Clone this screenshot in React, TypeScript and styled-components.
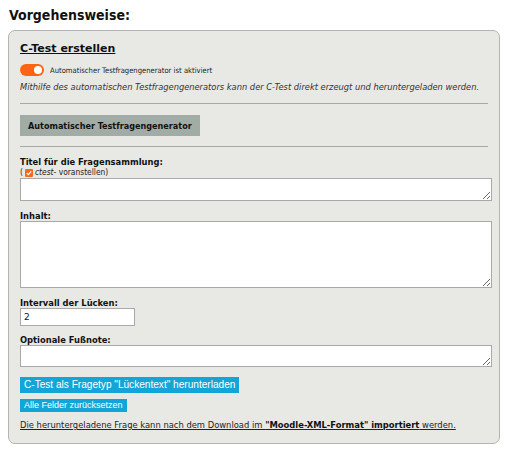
import React from "react";
import styled, {createGlobalStyle} from "styled-components";

const GlobalStyle = createGlobalStyle`
    body {
        margin: 0;
        background: #ffffff;
        font-family: "DejaVu Sans", Verdana, sans-serif;
        color: #1a1a1a;
    }
`

const narrow = `"DejaVu Sans Condensed", "DejaVu Sans", Tahoma, sans-serif`

const Page = styled.div`
    padding: 6px 9px 8px 8px;
`

const Heading = styled.h2`
    margin: 0 0 6px 1px;
    font-family: ${narrow};
    font-stretch: condensed;
    font-size: 14px;
    font-weight: bold;
    line-height: 18px;
    color: #111;
`

const Panel = styled.section`
    background: #e8e9e5;
    border: 1px solid #b4b4b0;
    border-radius: 7px;
    padding: 11px 7px 12px 11px;
    display: flex;
    flex-direction: column;
`

const SectionTitle = styled.h3`
    margin: 0;
    font-size: 11px;
    font-weight: bold;
    text-decoration: underline;
    line-height: 14px;
    color: #111;
`

const ToggleRow = styled.label`
    display: flex;
    align-items: center;
    gap: 6px;
    margin-top: 8px;
    font-family: ${narrow};
    font-stretch: condensed;
    font-size: 7.6px;
    color: #222;
`

const Switch = styled.span<{ $on: boolean }>`
    position: relative;
    width: 24px;
    height: 12px;
    border-radius: 6px;
    background: ${p => p.$on ? '#fa6414' : '#bbb'};

    &::after {
        content: '';
        position: absolute;
        top: 2px;
        left: ${p => p.$on ? '14px' : '2px'};
        width: 8px;
        height: 8px;
        border-radius: 50%;
        background: #fff;
    }
`

const Hint = styled.p`
    margin: 6px 0 0;
    font-size: 8.3px;
    font-style: italic;
    color: #333;
    line-height: 11px;
`

const Rule = styled.hr`
    border: none;
    border-top: 1px solid #a8a8a4;
    margin: 10px 4px 0 0;
`

const GreyButton = styled.button`
    align-self: flex-start;
    margin-top: 11px;
    height: 21px;
    padding: 0 8px;
    border: none;
    background: #a2aca6;
    font-family: ${narrow};
    font-stretch: condensed;
    font-size: 9px;
    font-weight: bold;
    color: #111;
`

const Field = styled.div<{ $gap: number }>`
    display: flex;
    flex-direction: column;
    margin-top: ${p => p.$gap}px;
`

const Label = styled.span`
    font-family: ${narrow};
    font-stretch: condensed;
    font-size: 9.3px;
    font-weight: bold;
    line-height: 11px;
    color: #111;
`

const SubLabel = styled.span`
    display: flex;
    align-items: center;
    font-family: ${narrow};
    font-stretch: condensed;
    font-size: 8.4px;
    line-height: 11px;
    color: #222;
`

const Check = styled.span`
    display: inline-flex;
    align-items: center;
    justify-content: center;
    width: 8px;
    height: 8px;
    margin: 0 2px 0 2px;
    background: #f26a1b;
    border-radius: 1px;
`

const Area = styled.textarea<{ $h: number }>`
    display: block;
    box-sizing: border-box;
    width: 100%;
    height: ${p => p.$h}px;
    margin: 0;
    border: 1px solid #a9a9a9;
    background: #fff;
    font-family: inherit;
    font-size: 9px;
    resize: vertical;
`

const Input = styled.input`
    box-sizing: border-box;
    width: 115px;
    height: 18px;
    margin: 0;
    padding: 0 3px;
    border: 1px solid #a9a9a9;
    background: #fff;
    font-family: inherit;
    font-size: 9px;
    color: #111;
`

const BlueButton = styled.button<{ $big?: boolean }>`
    align-self: flex-start;
    margin-top: ${p => p.$big ? 10 : 6}px;
    height: ${p => p.$big ? 16 : 13}px;
    padding: 0 4px;
    border: none;
    background: #13a5d7;
    color: #fff;
    font-family: "Liberation Sans", Arial, sans-serif;
    font-size: ${p => p.$big ? 10.1 : 9}px;
    line-height: 1;
`

const Note = styled.p`
    margin: 8px 0 0;
    font-size: 8.4px;
    line-height: 11px;
    text-decoration: underline;
    color: #222;

    b {
        color: #111;
    }
`

export default function App() {
    return (
        <>
            <GlobalStyle/>
            <Page>
                <Heading>Vorgehensweise:</Heading>
                <Panel>
                    <SectionTitle>C-Test erstellen</SectionTitle>
                    <ToggleRow>
                        <Switch $on={true}/>
                        Automatischer Testfragengenerator ist aktiviert
                    </ToggleRow>
                    <Hint>Mithilfe des automatischen Testfragengenerators kann der C-Test direkt erzeugt und heruntergeladen werden.</Hint>
                    <Rule/>
                    <GreyButton>Automatischer Testfragengenerator</GreyButton>
                    <Rule/>

                    <Field $gap={9}>
                        <Label>Titel für die Fragensammlung:</Label>
                        <SubLabel>
                            (
                            <Check>
                                <svg width="6" height="6" viewBox="0 0 6 6">
                                    <path d="M0.8 3.2 L2.4 4.7 L5.2 1.3" fill="none" stroke="#fff" strokeWidth="1.2"/>
                                </svg>
                            </Check>
                            <i>ctest</i>- voranstellen)
                        </SubLabel>
                        <Area $h={23}/>
                    </Field>

                    <Field $gap={9}>
                        <Label>Inhalt:</Label>
                        <Area $h={67}/>
                    </Field>

                    <Field $gap={9}>
                        <Label>Intervall der Lücken:</Label>
                        <Input defaultValue="2"/>
                    </Field>

                    <Field $gap={8}>
                        <Label>Optionale Fußnote:</Label>
                        <Area $h={22}/>
                    </Field>

                    <BlueButton $big>C-Test als Fragetyp "Lückentext" herunterladen</BlueButton>
                    <BlueButton>Alle Felder zurücksetzen</BlueButton>
                    <Note>
                        Die heruntergeladene Frage kann nach dem Download im <b>"Moodle-XML-Format" importiert</b> werden.
                    </Note>
                </Panel>
            </Page>
        </>
    );
}
